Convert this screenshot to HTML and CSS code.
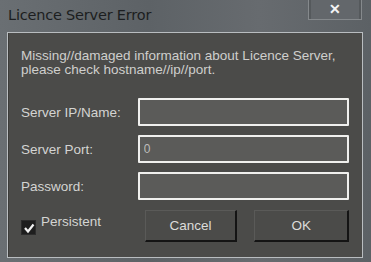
FILE: index.html
```html
<!doctype html>
<html lang="en">
<head>
  <meta charset="utf-8">
  <title>Licence Server Error</title>
  <link rel="stylesheet" href="styles.css">
</head>
<body>
  <div class="window">
    <div class="titlebar">
      <div class="title">Licence Server Error</div>
      <div class="close-btn">&#x2715;</div>
    </div>
    <div class="client">
      <p class="message">Missing//damaged information about Licence Server,<br>please check hostname//ip//port.</p>
      <div class="form-rows">
        <div class="form-row">
          <label class="form-label">Server IP/Name:</label>
          <input class="form-input" type="text">
        </div>
        <div class="form-row">
          <label class="form-label">Server Port:</label>
          <input class="form-input" type="text" value="0">
        </div>
        <div class="form-row">
          <label class="form-label">Password:</label>
          <input class="form-input" type="password">
        </div>
      </div>
      <div class="actions">
        <label class="persist">
          <span class="check-box">
            <svg width="12" height="12" viewBox="0 0 12 12"><path d="M2 6 L5 9.5 L10.5 2.5" fill="none" stroke="#f2f2f2" stroke-width="2.2"/></svg>
          </span>
          Persistent
        </label>
        <button class="dlg-btn cancel">Cancel</button>
        <button class="dlg-btn ok">OK</button>
      </div>
    </div>
  </div>
</body>
</html>
```

FILE: styles.css
```css
body {
  margin: 0;
  background: #5e6367;
  font-family: 'Liberation Sans', Arial, sans-serif;
}
.window {
  width: 371px;
  height: 262px;
  box-sizing: border-box;
  padding: 0 8px 4px 7px;
  background: linear-gradient(90deg, #6a6f73 0%, #5d6266 40%, #676b6f 70%, #5c6165 100%);
  display: flex;
  flex-direction: column;
}
.titlebar {
  height: 32px;
  display: flex;
  align-items: flex-start;
  justify-content: space-between;
}
.title {
  margin-top: 7px;
  margin-left: 1px;
  font-family: 'DejaVu Sans', sans-serif;
  font-size: 14.5px;
  color: #1c1e20;
  letter-spacing: -0.2px;
}
.close-btn {
  width: 54px;
  height: 20px;
  margin-right: 1px;
  box-sizing: border-box;
  border: 1px solid #85898c;
  border-top: none;
  box-shadow: inset 2px 0 0 #55595c, inset -2px 0 0 #55595c;
  background: #63676b;
  color: #f4f4f4;
  font-size: 14px;
  font-weight: 700;
  text-align: center;
  line-height: 19px;
}
.client {
  flex: 1;
  background: #4b4b49;
  border: 1px solid #b9bdc0;
  box-shadow: inset 1px 0 0 #3c3c3a;
  padding: 16px 13px 0 13px;
  color: #d2d2d0;
}
.message {
  margin: 0;
  font-size: 13.5px;
  line-height: 14px;
  color: #cfcfcd;
}
.form-rows {
  display: flex;
  flex-direction: column;
  gap: 9px;
  margin-top: 21px;
}
.form-row {
  display: flex;
  align-items: center;
}
.form-label {
  width: 117px;
  font-size: 13.5px;
  color: #d4d4d2;
}
.form-input {
  width: 212px;
  height: 28px;
  box-sizing: border-box;
  border: 2px solid #f0f0ee;
  border-radius: 1px;
  background: #5b5b59;
  color: #bdbdbb;
  font-family: 'Liberation Sans', Arial, sans-serif;
  font-size: 12px;
  padding: 0 4px;
  outline: none;
}
.actions {
  display: flex;
  align-items: flex-start;
  margin-top: 10px;
}
.persist {
  display: flex;
  align-items: flex-start;
  gap: 5px;
  width: 124px;
  font-size: 13.5px;
  color: #d4d4d2;
  padding-top: 4px;
}
.check-box {
  width: 15px;
  height: 15px;
  box-sizing: border-box;
  margin-top: 6px;
  background: #1e1e1e;
  border: 1px solid #2c2c2c;
  display: flex;
  align-items: center;
  justify-content: center;
}
.dlg-btn {
  height: 32px;
  box-sizing: border-box;
  background: #4b4b49;
  border: 1px solid #5a5a58;
  border-right: 2px solid #141414;
  border-bottom: 2px solid #141414;
  color: #dcdcda;
  font-family: 'Liberation Sans', Arial, sans-serif;
  font-size: 13.5px;
  padding: 0;
}
.cancel {
  width: 93px;
}
.ok {
  width: 95px;
  margin-left: 17px;
}
```
